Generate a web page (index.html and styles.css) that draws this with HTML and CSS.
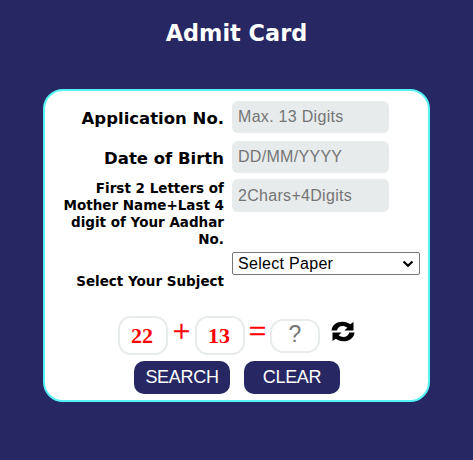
FILE: index.html
```html
<!DOCTYPE html>
<html lang="en">

<head>
  <meta charset="UTF-8">
  <meta name="viewport" content="width=device-width, initial-scale=1.0">
  <title>Admit Card</title>
  <link rel="stylesheet" href="styles.css">
</head>

<body>

  <h2>Admit Card</h2>

  <form class="card">
    <!-- Candidate details -->
    <div class="fields">
      <label for="appNo">Application No.</label>
      <input type="text" id="appNo" placeholder="Max. 13 Digits">

      <label for="dob">Date of Birth</label>
      <input type="text" id="dob" placeholder="DD/MM/YYYY">

      <label for="code" class="small">First 2 Letters of<br>Mother Name+Last 4<br>digit of Your Aadhar<br>No.</label>
      <input type="text" id="code" class="code" placeholder="2Chars+4Digits">

      <label for="subject" class="small subject">Select Your Subject</label>
      <div class="select-box">
        <select id="subject">
          <option>Select Paper</option>
        </select>
        <svg class="arrow" viewBox="0 0 12 8"><path d="M1.5 1.5L6 5.8L10.5 1.5" /></svg>
      </div>
    </div>

    <!-- Captcha -->
    <div class="captcha">
      <span class="num">22</span>
      <span class="sign plus">+</span>
      <span class="num">13</span>
      <span class="sign equals">=</span>
      <input type="text" class="answer" placeholder="?">
      <svg class="refresh" viewBox="0 0 24 22">
        <path d="M0 10C.5 4 5.5.8 11.5.8c3.400 0 6 1 8 2.600L23 1v9h-9.500l3-3C15 5.700 13.500 5.200 11.500 5.200 8.500 5.200 6.300 7 5.500 10z" />
        <path d="M24 12C23.500 18 18.500 21.200 12.500 21.200c-3.400 0-6-1-8-2.600L1 21v-9h9.500l-3 3c1.500 1.300 3 1.800 5 1.800 3 0 5.200-1.800 6-4.800z" />
      </svg>
    </div>

    <div class="buttons">
      <button type="button">SEARCH</button>
      <button type="reset">CLEAR</button>
    </div>
  </form>

</body>

</html>
```

FILE: styles.css
```css
body {
  margin: 0;
  background: #262763;
  font-family: Verdana, "DejaVu Sans", sans-serif;
}

h2 {
  margin: 0;
  padding-top: 18px;
  height: 71px;
  line-height: 30px;
  color: #fff;
  font-size: 22.4px;
  text-align: center;
}

.card {
  width: 387px;
  height: 313px;
  margin-left: 43px;
  padding: 10px 8px 0 10px;
  box-sizing: border-box;
  background: #fff;
  border: 2px solid #55f3f5;
  border-radius: 20px;
}

/* Form rows */
.fields {
  display: grid;
  grid-template-columns: 169px 188px;
  grid-template-rows: 40px 38px 73px 42px;
  column-gap: 8px;
}

label {
  padding-top: 1px;
  font-size: 16.5px;
  font-weight: bold;
  line-height: 34px;
  text-align: right;
  white-space: nowrap;
}

.small {
  font-size: 13.5px;
  line-height: 17px;
}

.subject {
  padding-top: 21px;
}

input {
  width: 157px;
  height: 32px;
  padding: 0 6px;
  box-sizing: border-box;
  border: 0;
  border-radius: 6px;
  background: #e7ebeb;
  font: 16px "Liberation Sans", Arial, sans-serif;
  letter-spacing: 0.3px;
}

.code {
  height: 33px;
}

input::placeholder {
  color: #757575;
}

.select-box {
  position: relative;
  height: 23px;
}

select {
  display: block;
  width: 188px;
  height: 23px;
  padding: 0 5px;
  appearance: none;
  border: 1px solid #767676;
  border-radius: 2px;
  background: #fff;
  color: #000;
  font: 16px "Liberation Sans", Arial, sans-serif;
  letter-spacing: 0.3px;
}

.arrow {
  position: absolute;
  top: 8px;
  right: 6px;
  width: 12px;
  height: 8px;
  fill: none;
  stroke: #000;
  stroke-width: 2.2;
}

/* Captcha row */
.captcha {
  display: flex;
  height: 39px;
  margin: 22px 0 0 63px;
  color: #f00;
}

.num {
  width: 50px;
  height: 39px;
  padding-right: 2px;
  box-sizing: border-box;
  border: 2px solid #e7ebeb;
  border-radius: 13px;
  font: bold 22px/35px "Liberation Serif", "Times New Roman", serif;
  text-align: center;
}

.sign {
  width: 27px;
  font: 31px/32px "Liberation Serif", "Times New Roman", serif;
  text-align: center;
  -webkit-text-stroke: 0.5px #f00;
}

.equals {
  width: 25px;
}

.answer {
  width: 50px;
  height: 34px;
  margin-top: 3px;
  padding: 0 0 3px;
  border: 2px solid #e7ebeb;
  border-radius: 13px;
  background: #fff;
  font-size: 23px;
  text-align: center;
}

.refresh {
  width: 24px;
  height: 21px;
  margin: 5px 0 0 11px;
}

.refresh path {
  fill: #000;
}

/* Buttons */
.buttons {
  display: flex;
  gap: 14px;
  margin: 6px 0 0 79px;
}

button {
  width: 96px;
  height: 33px;
  padding: 0;
  border: 0;
  border-radius: 10px;
  background: #262763;
  color: #fff;
  font: 18px "Liberation Sans", Arial, sans-serif;
  letter-spacing: -0.3px;
}
```
